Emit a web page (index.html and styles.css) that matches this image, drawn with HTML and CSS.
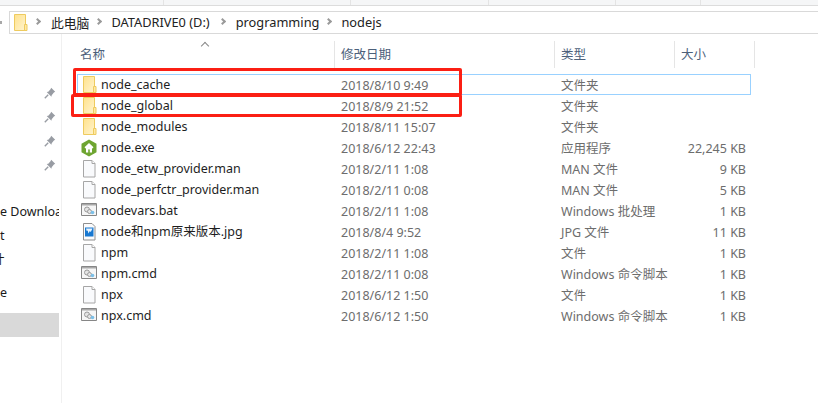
FILE: index.html
```html
<!DOCTYPE html>
<html lang="zh-CN">
<head>
    <meta charset="UTF-8">
    <title>nodejs</title>
    <link rel="stylesheet" href="styles.css">
</head>
<body>
    <svg class="defs" width="0" height="0">
        <defs>
            <linearGradient id="folderFill" x1="0" y1="0" x2="1" y2="1">
                <stop offset="0" stop-color="#ffe28d"/>
                <stop offset="1" stop-color="#fff4cf"/>
            </linearGradient>
        </defs>
        <symbol id="folder" viewBox="0 0 16 18">
            <path d="M2.500 .5h11v16h-11z" fill="url(#folderFill)" stroke="#eecb5f"/>
            <path d="M12.500 10.500h2.500v6h-2.500z" fill="#ffe9a6" stroke="#eecb5f"/>
        </symbol>
        <symbol id="file" viewBox="0 0 16 18">
            <path d="M2.500 .5h8.500l3 3v13.500H2.500z" fill="#f9fafc" stroke="#a6a6a6"/>
            <path d="M11 .5v3h3" fill="#fff" stroke="#a6a6a6"/>
        </symbol>
        <symbol id="cmd" viewBox="0 0 16 18">
            <path d="M.5 1.500h15v12H.5z" fill="#f6f6f6" stroke="#868686"/>
            <path d="M1 2h14v1.500H1z" fill="#a9a9a9"/>
            <circle cx="6" cy="7.500" r="2.500" fill="#e4e4e4" stroke="#9b9b9b"/>
            <circle cx="8.500" cy="9.500" r="2" fill="#e4e4e4" stroke="#9b9b9b"/>
            <circle cx="11.500" cy="10.500" r="1.800" fill="#7cc0e8"/>
        </symbol>
        <symbol id="jpg" viewBox="0 0 16 18">
            <path d="M2.500 .5h8.500l3 3v13.500H2.500z" fill="#fbfbfc" stroke="#8f8f8f"/>
            <path d="M4 4.500h8.500v9H4z" fill="#1878d0"/>
            <path d="M5 5.500h6.500l-1.700 3.500-1-1-1.300 2.500-.8-3-1 .5z" fill="#e8f4ff"/>
        </symbol>
        <symbol id="exe" viewBox="0 0 16 18">
            <path d="M8 .5l7.500 4.200v8.600L8 17.500.5 13.300V4.700z" fill="#6ea531"/>
            <path d="M8 4L3.500 8.200 5 9.700v3.800h2.200V11a.8.8 0 0 1 1.600 0v2.500H11V9.700l1.500-1.500z" fill="#fff"/>
        </symbol>
        <symbol id="pin" viewBox="0 0 12 12">
            <path d="M7.200.8l4 4-1.300.7-2.200 2.700-.3 1.600-4.700-4.700 1.600-.4 2.200-2.500z" fill="#989ca3"/>
            <path d="M4.200 7.800L.8 11.200" stroke="#989ca3" stroke-width="1.400"/>
        </symbol>
    </svg>

    <div class="ribbon">
        <span class="ribbon-cell c1"></span>
        <span class="ribbon-cell c2"></span>
        <span class="ribbon-cell c3"></span>
        <span class="ribbon-cell c4"></span>
        <span class="ribbon-cell c5"></span>
    </div>

    <div class="address-row">
        <span class="back"></span>
        <div class="address">
            <svg class="address-icon"><use href="#folder"/></svg>
            <span class="crumb-sep first"></span>
            <span>此电脑</span>
            <span class="crumb-sep"></span>
            <span>DATADRIVE0 (D:)</span>
            <span class="crumb-sep wide"></span>
            <span>programming</span>
            <span class="crumb-sep"></span>
            <span>nodejs</span>
        </div>
    </div>

    <div class="main">
        <div class="sidebar">
            <div class="pins">
                <svg class="pin"><use href="#pin"/></svg>
                <svg class="pin"><use href="#pin"/></svg>
                <svg class="pin"><use href="#pin"/></svg>
                <svg class="pin"><use href="#pin"/></svg>
            </div>
            <div class="nav nav-first">e Downloads</div>
            <div class="nav">t</div>
            <div class="nav nav-clip">计</div>
            <div class="nav nav-gap">e</div>
            <div class="nav nav-selected"></div>
        </div>

        <div class="files">
            <span class="sort-arrow"></span>
            <div class="row head">
                <div class="name">名称</div>
                <div class="date">修改日期</div>
                <div class="type">类型</div>
                <div class="size">大小</div>
            </div>

            <div class="row focused">
                <div class="name"><svg class="icon"><use href="#folder"/></svg>node_cache</div>
                <div class="date">2018/8/10 9:49</div>
                <div class="type">文件夹</div>
                <div class="size"></div>
            </div>
            <div class="row">
                <div class="name"><svg class="icon"><use href="#folder"/></svg>node_global</div>
                <div class="date">2018/8/9 21:52</div>
                <div class="type">文件夹</div>
                <div class="size"></div>
            </div>
            <div class="row">
                <div class="name"><svg class="icon"><use href="#folder"/></svg>node_modules</div>
                <div class="date">2018/8/11 15:07</div>
                <div class="type">文件夹</div>
                <div class="size"></div>
            </div>
            <div class="row">
                <div class="name"><svg class="icon"><use href="#exe"/></svg>node.exe</div>
                <div class="date">2018/6/12 22:43</div>
                <div class="type">应用程序</div>
                <div class="size">22,245 KB</div>
            </div>
            <div class="row">
                <div class="name"><svg class="icon"><use href="#file"/></svg>node_etw_provider.man</div>
                <div class="date">2018/2/11 1:08</div>
                <div class="type">MAN 文件</div>
                <div class="size">9 KB</div>
            </div>
            <div class="row">
                <div class="name"><svg class="icon"><use href="#file"/></svg>node_perfctr_provider.man</div>
                <div class="date">2018/2/11 0:08</div>
                <div class="type">MAN 文件</div>
                <div class="size">5 KB</div>
            </div>
            <div class="row">
                <div class="name"><svg class="icon"><use href="#cmd"/></svg>nodevars.bat</div>
                <div class="date">2018/2/11 1:08</div>
                <div class="type">Windows 批处理</div>
                <div class="size">1 KB</div>
            </div>
            <div class="row">
                <div class="name"><svg class="icon"><use href="#jpg"/></svg>node和npm原来版本.jpg</div>
                <div class="date">2018/8/4 9:52</div>
                <div class="type">JPG 文件</div>
                <div class="size">11 KB</div>
            </div>
            <div class="row">
                <div class="name"><svg class="icon"><use href="#file"/></svg>npm</div>
                <div class="date">2018/2/11 1:08</div>
                <div class="type">文件</div>
                <div class="size">1 KB</div>
            </div>
            <div class="row">
                <div class="name"><svg class="icon"><use href="#cmd"/></svg>npm.cmd</div>
                <div class="date">2018/2/11 0:08</div>
                <div class="type">Windows 命令脚本</div>
                <div class="size">1 KB</div>
            </div>
            <div class="row">
                <div class="name"><svg class="icon"><use href="#file"/></svg>npx</div>
                <div class="date">2018/6/12 1:50</div>
                <div class="type">文件</div>
                <div class="size">1 KB</div>
            </div>
            <div class="row">
                <div class="name"><svg class="icon"><use href="#cmd"/></svg>npx.cmd</div>
                <div class="date">2018/6/12 1:50</div>
                <div class="type">Windows 命令脚本</div>
                <div class="size">1 KB</div>
            </div>
        </div>
    </div>

    <div class="mark mark-cache"></div>
    <div class="mark mark-global"></div>
</body>
</html>
```

FILE: styles.css
```css
html, body {
    margin: 0;
    height: 403px;
    overflow: hidden;
}
body {
    position: relative;
    background-color: #fff;
    color: #1e1e1e;
    font-family: "Noto Sans", "Noto Sans CJK SC", sans-serif;
    font-size: 12px;
}
.defs {
    position: absolute;
}

/* strip left of the ribbon */
.ribbon {
    display: flex;
    height: 5px;
    background-color: #f5f6f7;
    border-bottom: 1px solid #dcdcdc;
}
.ribbon-cell {
    border-right: 1px solid #e4e4e4;
}
.c1 { width: 163px; }
.c2 { width: 186px; }
.c3 { width: 137px; }
.c4 { width: 126px; }
.c5 { width: 84px; }

/* address bar */
.address-row {
    display: flex;
    align-items: center;
    margin-top: 5px;
    height: 23px;
}
.back {
    width: 2px;
    height: 3px;
    margin-right: 7px;
    background-color: #a8a8a8;
}
.address {
    flex: 1;
    display: flex;
    align-items: center;
    height: 20px;
    padding-bottom: 1px;
    border: 1px solid #d9d9d9;
    border-right: none;
    color: #222;
    font-size: 12.8px;
}
.address-icon {
    width: 16px;
    height: 18px;
    margin-left: 2px;
    margin-top: 1px;
}
.crumb-sep {
    position: relative;
    width: 22px;
    height: 10px;
}
.crumb-sep::before {
    content: "";
    position: absolute;
    left: 7px;
    top: 2px;
    width: 5px;
    height: 5px;
    border-top: 2px solid #9a9a9a;
    border-right: 2px solid #9a9a9a;
    box-sizing: border-box;
    transform: rotate(45deg);
}
.crumb-sep.first {
    width: 23px;
}
.crumb-sep.wide {
    width: 26px;
}
.crumb-sep.wide::before {
    left: 10px;
}

/* sidebar */
.main {
    display: flex;
    height: 369px;
}
.sidebar {
    position: relative;
    width: 61px;
    flex-shrink: 0;
    border-right: 1px solid #f0f0f0;
    overflow: hidden;
    padding-top: 166px;
    color: #1a1a1a;
    font-size: 12.5px;
}
.pins {
    position: absolute;
    top: 53px;
    left: 44px;
    display: flex;
    flex-direction: column;
    gap: 12px;
}
.pin {
    width: 12px;
    height: 12px;
}
.nav {
    width: 59px;
    height: 24px;
    line-height: 24px;
    white-space: nowrap;
    overflow: hidden;
}
.nav-clip {
    text-indent: -8px;
}
.nav-gap {
    margin-top: 9px;
}
.nav-selected {
    margin-top: 8px;
    background-color: #d9d9d9;
}

/* file list */
.files {
    position: relative;
    flex: 1;
}
.sort-arrow {
    position: absolute;
    left: 140px;
    top: 9px;
    width: 5px;
    height: 5px;
    border-left: 1px solid #888;
    border-top: 1px solid #888;
    transform: rotate(45deg);
}
.row {
    display: flex;
    height: 21px;
    line-height: 21px;
    width: 674px;
    margin-left: 15px;
    box-sizing: border-box;
    border: 1px solid transparent;
    white-space: nowrap;
    font-size: 12.5px;
}
.row > div {
    box-sizing: border-box;
}
.row .name {
    width: 256px;
    display: flex;
    align-items: center;
    padding-left: 3px;
}
.row .date {
    width: 220px;
    padding-left: 7px;
    color: #6d6d6d;
}
.row .type {
    width: 120px;
    padding-left: 7px;
    color: #6d6d6d;
}
.row .size {
    width: 72px;
    text-align: right;
    color: #6d6d6d;
}
.icon {
    width: 16px;
    height: 18px;
    margin-right: 4px;
    flex-shrink: 0;
}
.focused {
    border-color: #99d1ff;
}
.head {
    width: 682px;
    height: 27px;
    line-height: 27px;
    margin-left: 11px;
    margin-top: 7px;
    margin-bottom: 6px;
    border: none;
    font-size: 12.5px;
}
.head > div {
    border-right: 1px solid #e5e5e5;
}
.row.head .name {
    width: 262px;
    padding-left: 7px;
    color: #4c607a;
}
.row.head .date,
.row.head .type {
    padding-left: 6px;
    color: #4c607a;
}
.row.head .size {
    width: 80px;
    padding-left: 6px;
    text-align: left;
    color: #4c607a;
}

/* red annotation boxes drawn on the screenshot */
.mark {
    position: absolute;
    box-sizing: border-box;
    border: 3px solid #fb1f14;
    border-radius: 2px;
}
.mark-cache {
    left: 73px;
    top: 68px;
    width: 389px;
    height: 28px;
}
.mark-global {
    left: 71px;
    top: 94px;
    width: 391px;
    height: 23px;
}
```
